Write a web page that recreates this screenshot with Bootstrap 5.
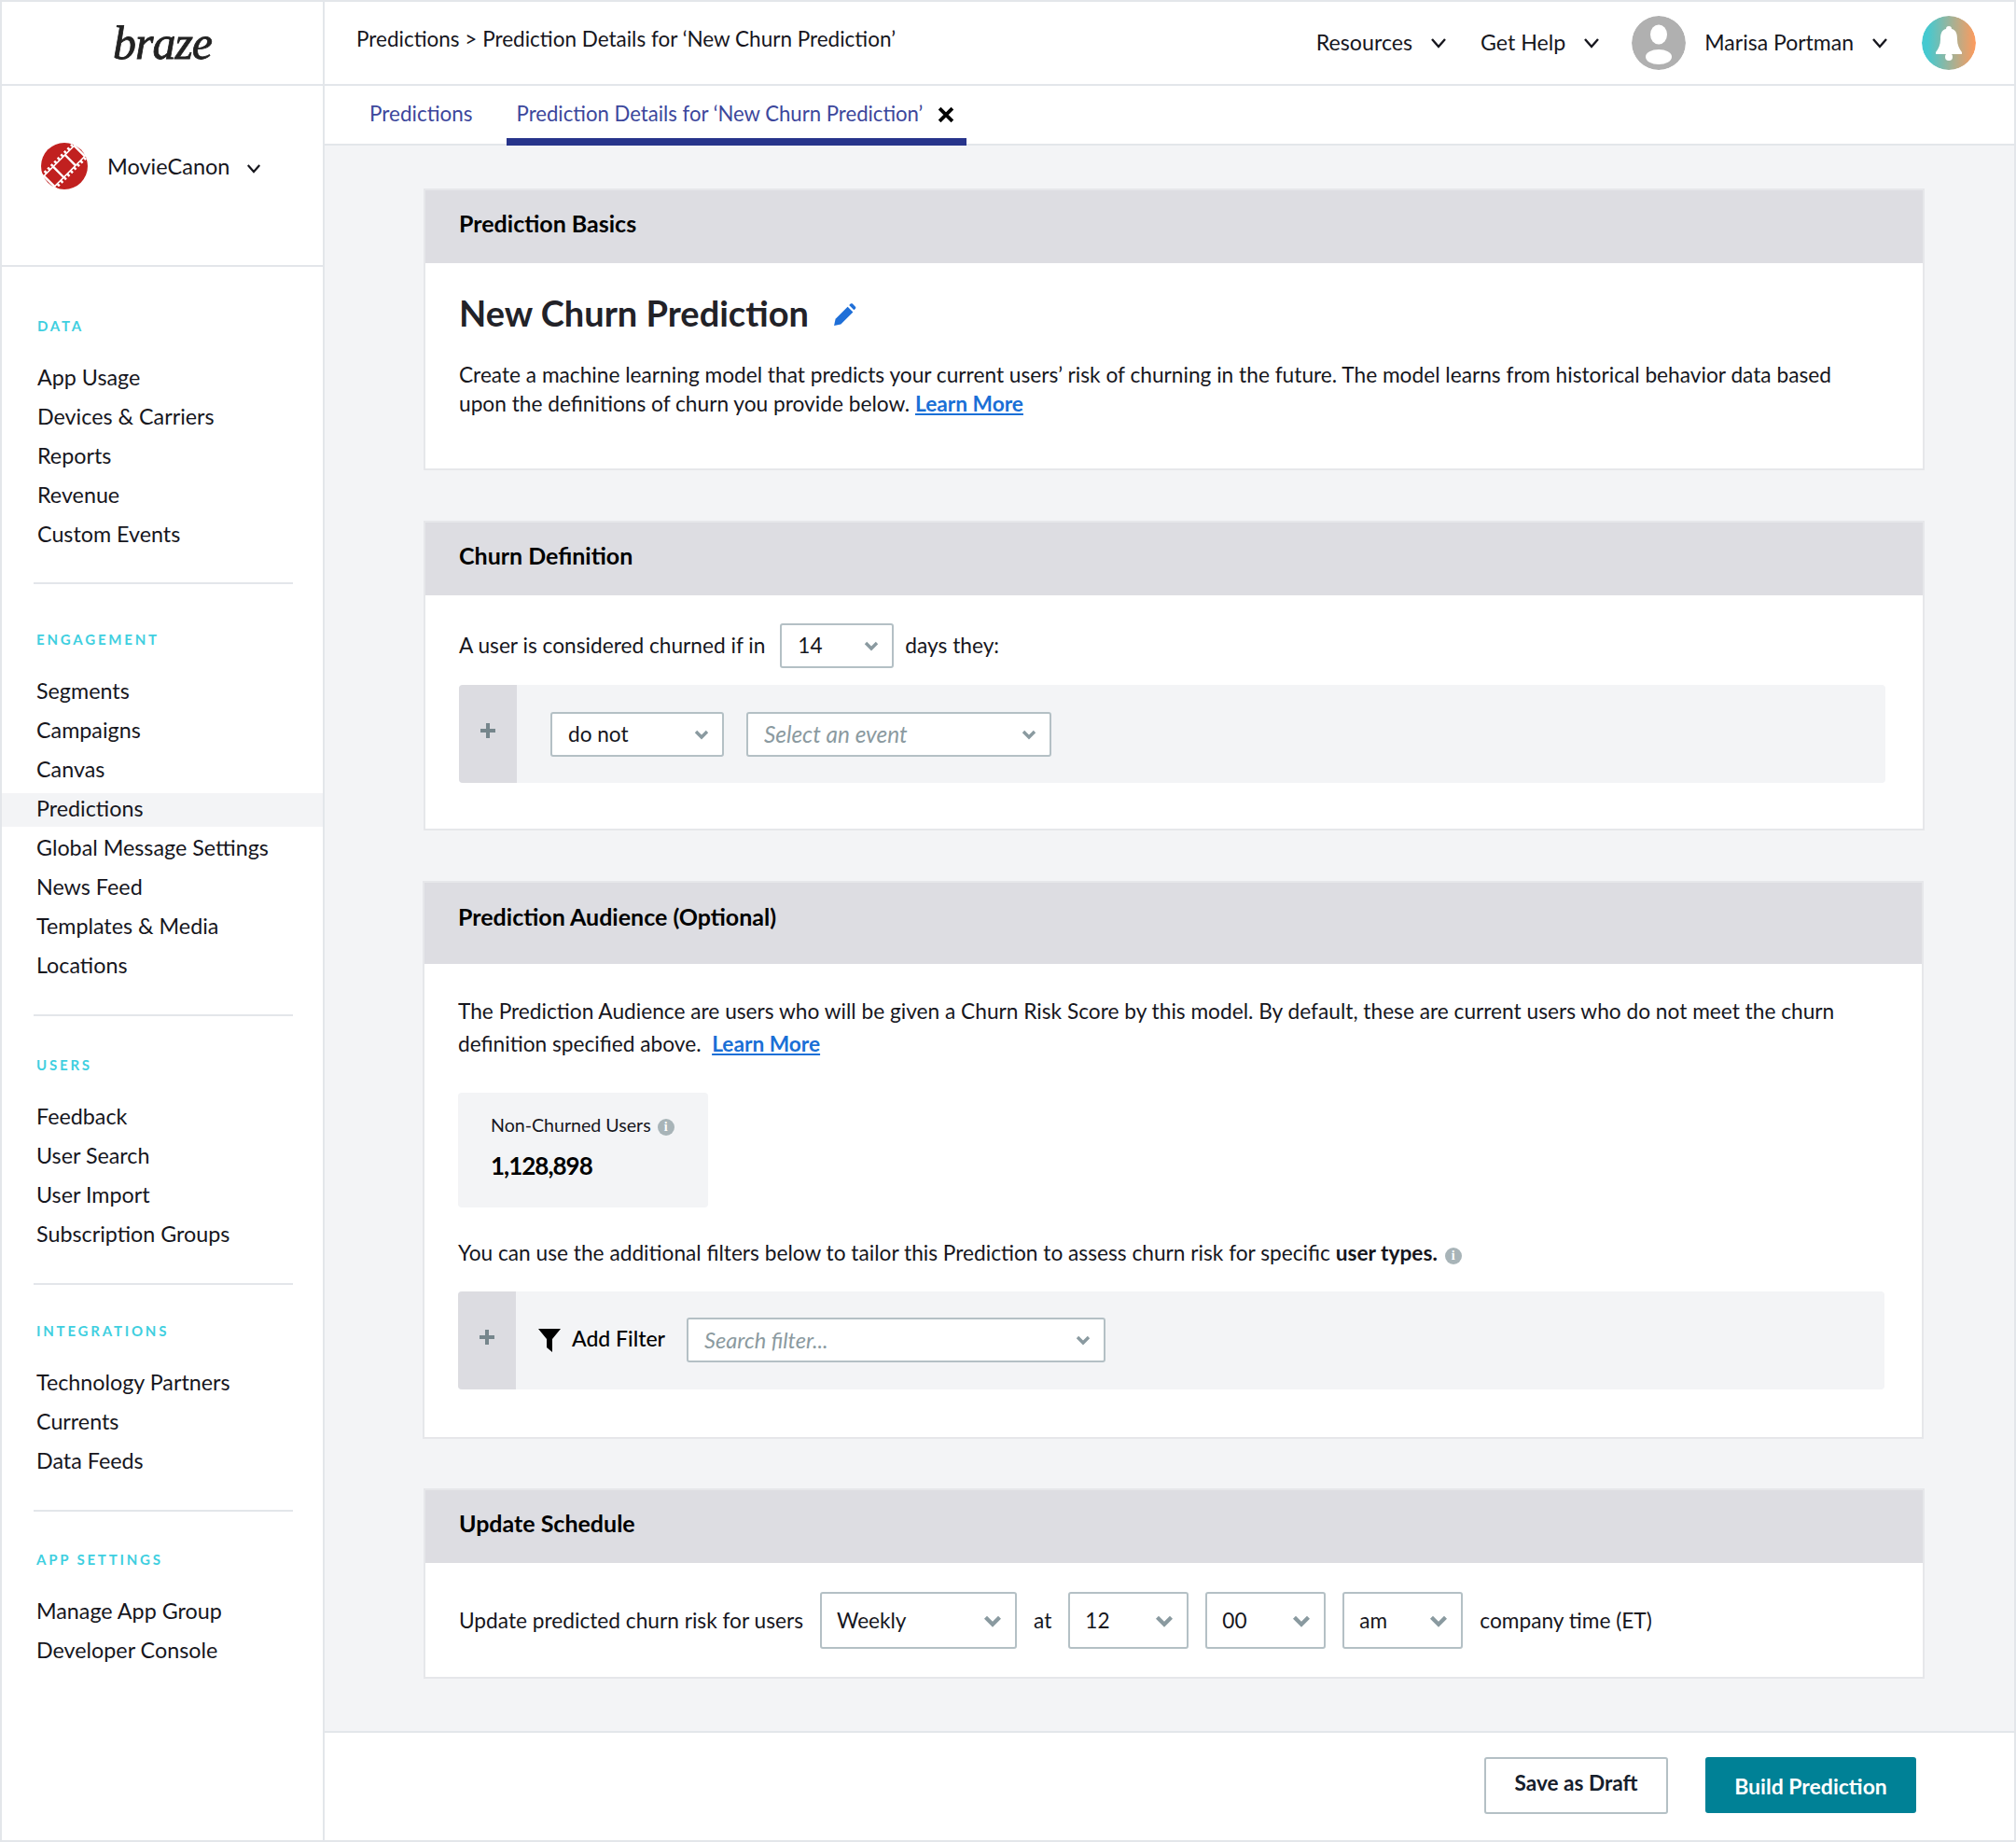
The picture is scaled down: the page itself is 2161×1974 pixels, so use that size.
<!DOCTYPE html>
<html lang="en">
<head>
    <meta charset="UTF-8">
    <title>Prediction Details</title>
    <link href="https://cdn.jsdelivr.net/npm/bootstrap@5.3.0/dist/css/bootstrap.min.css" rel="stylesheet">
    <style>
        html, body { height: 100%; }
        body {
            font-family: "Lato", "Liberation Sans", sans-serif;
            font-size: 22.7px;
            line-height: 30px;
            color: #16161d;
            background: #fff;
        }
        .app-shell { height: 1974px; border: 2px solid #e3e6ea; }

        /* sidebar */
        .side-col { width: 346px; flex: none; border-right: 2px solid #e3e6ea; }
        .logo-cell { height: 90px; border-bottom: 2px solid #e3e6ea; }
        .logo-word {
            font-family: "Liberation Serif", serif;
            font-style: italic;
            font-size: 50px;
            line-height: 50px;
            letter-spacing: -1px;
            color: #222;
            -webkit-text-stroke: 0.8px #222;
        }
        .app-cell { height: 194px; padding: 0 0 21px 42px; border-bottom: 2px solid #e3e6ea; font-size: 23.5px; }
        .app-name { margin-left: 21px; margin-right: 18px; }
        .app-cell svg.chev { margin-top: 5px; }
        .side-label {
            font-size: 15px;
            line-height: 20px;
            font-weight: 700;
            letter-spacing: 2.8px;
            color: #3fcfe0;
            padding-left: 37px;
            margin-bottom: 29px;
        }
        .side-col .nav-link {
            height: 36px;
            line-height: 33px;
            padding: 0 0 0 37px;
            margin-bottom: 6px;
            font-size: 23.3px;
            color: #16161d;
        }
        .side-col .nav-link.on { background: #f3f4f6; }
        .side-rule { height: 2px; margin: 27px 32px 0 34px; background: #e3e6ea; }
        .grp-data { padding-top: 53px; }
        .grp-data .side-rule { margin-top: 26px; }
        .grp-data .side-label, .grp-data .nav-link { padding-left: 38px !important; }
        .grp-eng { padding-top: 49px; }
        .grp-users { padding-top: 42px; }
        .grp-int { padding-top: 39px; }
        .grp-app { padding-top: 41px; }

        /* top bar and tabs */
        .top-bar { height: 90px; flex: none; border-bottom: 2px solid #e3e6ea; padding: 0 41px 0 34px; font-size: 23.2px; }
        .crumbs { margin-top: -8px; font-size: 22.5px; }
        .top-item { margin-left: 36px; }
        .top-item.user-item { margin-left: 34px; }
        .top-label { margin-top: -3px; }
        .user-item .top-label { font-size: 23px; }
        .top-item svg.chev { margin-left: 19px; }
        .round-pic { width: 58px; height: 58px; border-radius: 50%; }
        .avatar-pic { margin-right: 20px; }
        .tab-bar { height: 64px; flex: none; border-bottom: 2px solid #e3e6ea; padding-left: 37px; }
        .tab-bar .nav-link {
            height: 64px;
            line-height: 59px;
            padding: 0 11px;
            font-size: 22.5px;
            color: #3c479c;
            border-bottom: 8px solid transparent;
        }
        .tab-bar .nav-link.on { font-size: 22.15px; border-bottom-color: #27348b; margin-left: 25px; padding-right: 13px; }
        .tab-x { margin: 22px 0 0 16px; }

        /* main area */
        .main-area { background: #f3f4f6; padding: 46px 96px 0 106px; }
        .pred-card {
            --bs-card-border-width: 2px;
            --bs-card-border-color: #e6e7ea;
            --bs-card-border-radius: 0;
            --bs-card-inner-border-radius: 0;
            margin-bottom: 54px;
        }
        .pred-card .card-header {
            height: 78px;
            padding: 0 36px 8px;
            background: #dddde2;
            border: 0;
            font-size: 25px;
            font-weight: 700;
            color: #000;
            display: flex;
            align-items: center;
        }
        .pred-card .card-body { padding: 0 36px; }
        .aud-card { margin-left: -1px; margin-right: 1px; margin-bottom: 53px; }
        .pred-card.aud-card .card-header { height: 87px; padding-bottom: 16px; }
        .big-title { font-size: 38px; line-height: 44px; font-weight: 700; color: #222228; margin: 0; }
        .title-row { padding-top: 31px; }
        .edit-pen { margin: 4px 0 0 26px; }
        .intro { margin: 30px 0 54px; padding-right: 40px; line-height: 30.5px; }
        .more-link { color: #1a6fd6; font-weight: 700; }
        .pick {
            --bs-form-select-bg-img: url("data:image/svg+xml,%3csvg xmlns='http://www.w3.org/2000/svg' viewBox='0 0 16 16'%3e%3cpath fill='none' stroke='%238a9aa0' stroke-width='3.4' d='M2 5l6 6 6-6'/%3e%3c/svg%3e");
            width: auto;
            height: 48px;
            padding: 0 36px 0 17px;
            font-size: 22.6px;
            line-height: 30px;
            color: #16161d;
            border: 2px solid #b4c0c5;
            border-radius: 3px;
            background-size: 16px 16px;
            background-position: right 14px center;
        }
        .pick.empty { color: #8b9aa0; font-style: italic; font-size: 24.4px; }
        .pick.search-pick { font-size: 23.6px; }
        .pick-tall { height: 61px; background-size: 20px 20px; padding-left: 16px; }
        .w-14 { width: 122px; }
        .w-not { width: 186px; }
        .w-evt { width: 327px; }
        .w-search { width: 449px; }
        .w-week { width: 211px; }
        .w-time { width: 129px; }
        .churn-line { padding-top: 30px; margin-bottom: 18px; }
        .churn-body { padding-bottom: 49px !important; }
        .rule-box { height: 105px; background: #f3f4f6; border-radius: 4px; overflow: hidden; }
        .plus-cell { width: 62px; flex: none; background: #dcdce1; padding-top: 40px; text-align: center; line-height: 0; }
        .rule-picks { padding: 29px 0 0 36px; }
        .filter-picks { padding-left: 24px; padding-bottom: 2px; }
        .stat-box { width: 268px; height: 123px; background: #f3f4f6; border-radius: 4px; padding: 20px 0 0 35px; margin: 35px 0 34px; }
        .stat-name { font-size: 19.6px; line-height: 30px; }
        .stat-num { font-size: 26px; line-height: 36px; font-weight: 700; letter-spacing: -1px; color: #000; margin-top: 10px; }
        .info-dot {
            display: inline-block;
            width: 18px;
            height: 18px;
            margin-left: 2px;
            border-radius: 50%;
            background: #a8b4b8;
            color: #fff;
            font: 700 14px/18px "Liberation Serif", serif;
            text-align: center;
            vertical-align: 1px;
        }
        .aud-text { line-height: 35px; padding-top: 33px; }
        .aud-body { padding-bottom: 51px !important; }
        .filter-note { margin-bottom: 26px; }
        .add-label { font-size: 23px; font-weight: 500; color: #000; margin: -3px 23px 0 12px; }
        .sched-body { padding-top: 31px !important; padding-bottom: 30px !important; gap: 18px; }

        /* footer */
        .foot-bar { height: 117px; flex: none; border-top: 2px solid #e3e6ea; padding: 26px 105px 0 0; }
        .draft-btn {
            width: 197px;
            height: 61px;
            border: 2px solid #b4c0c5;
            border-radius: 3px;
            background: #fff;
            color: #16202c;
            font-size: 22.6px;
            font-weight: 700;
            padding: 0 0 6px;
        }
        .build-btn {
            width: 226px;
            height: 60px;
            margin-left: 40px;
            border: 0;
            border-radius: 3px;
            background: #008196;
            color: #fff;
            font-size: 23px;
            font-weight: 700;
            padding: 2px 0 0;
        }
    </style>
</head>
<body>
<svg width="0" height="0" class="position-absolute">
    <symbol id="chev" viewBox="0 0 18 12"><path d="M2 2l7 8 7-8" fill="none" stroke="#16161d" stroke-width="2.4"/></symbol>
    <symbol id="plus" viewBox="0 0 18 18"><path d="M9 1v16M1 9h16" fill="none" stroke="#76868c" stroke-width="4"/></symbol>
</svg>
<div class="app-shell d-flex">
    <aside class="side-col d-flex flex-column">
        <div class="logo-cell d-flex align-items-center justify-content-center"><span class="logo-word">braze</span></div>
        <div class="app-cell d-flex align-items-center">
            <svg width="50" height="50" viewBox="0 0 50 50">
                <circle cx="25" cy="25" r="25" fill="#c1201f"/>
                <g transform="rotate(-45 25 25)" fill="none" stroke="#fff">
                    <path d="M-5 17H55M-5 33H55" stroke-width="1.6"/>
                    <path d="M-5 15H55M-5 35H55" stroke-width="3" stroke-dasharray="2.5 2.5"/>
                    <path d="M16 17V33M34 17V33M2 17V33M48 17V33" stroke-width="2.4"/>
                </g>
            </svg>
            <span class="app-name">MovieCanon</span>
            <svg class="chev" width="16" height="11"><use href="#chev"/></svg>
        </div>
        <div class="grp-data">
            <div class="side-label">DATA</div>
            <nav class="nav flex-column">
                <a class="nav-link" href="#">App Usage</a>
                <a class="nav-link" href="#">Devices &amp; Carriers</a>
                <a class="nav-link" href="#">Reports</a>
                <a class="nav-link" href="#">Revenue</a>
                <a class="nav-link" href="#">Custom Events</a>
            </nav>
            <div class="side-rule"></div>
        </div>
        <div class="grp-eng">
            <div class="side-label">ENGAGEMENT</div>
            <nav class="nav flex-column">
                <a class="nav-link" href="#">Segments</a>
                <a class="nav-link" href="#">Campaigns</a>
                <a class="nav-link" href="#">Canvas</a>
                <a class="nav-link on" href="#">Predictions</a>
                <a class="nav-link" href="#">Global Message Settings</a>
                <a class="nav-link" href="#">News Feed</a>
                <a class="nav-link" href="#">Templates &amp; Media</a>
                <a class="nav-link" href="#">Locations</a>
            </nav>
            <div class="side-rule"></div>
        </div>
        <div class="grp-users">
            <div class="side-label">USERS</div>
            <nav class="nav flex-column">
                <a class="nav-link" href="#">Feedback</a>
                <a class="nav-link" href="#">User Search</a>
                <a class="nav-link" href="#">User Import</a>
                <a class="nav-link" href="#">Subscription Groups</a>
            </nav>
            <div class="side-rule"></div>
        </div>
        <div class="grp-int">
            <div class="side-label">INTEGRATIONS</div>
            <nav class="nav flex-column">
                <a class="nav-link" href="#">Technology Partners</a>
                <a class="nav-link" href="#">Currents</a>
                <a class="nav-link" href="#">Data Feeds</a>
            </nav>
            <div class="side-rule"></div>
        </div>
        <div class="grp-app">
            <div class="side-label">APP SETTINGS</div>
            <nav class="nav flex-column">
                <a class="nav-link" href="#">Manage App Group</a>
                <a class="nav-link" href="#">Developer Console</a>
            </nav>
        </div>
    </aside>

    <div class="flex-grow-1 d-flex flex-column">
        <header class="top-bar d-flex align-items-center">
            <div class="crumbs flex-grow-1">Predictions &gt; Prediction Details for ‘New Churn Prediction’</div>
            <div class="top-item d-flex align-items-center"><span class="top-label">Resources</span><svg class="chev" width="18" height="12"><use href="#chev"/></svg></div>
            <div class="top-item d-flex align-items-center"><span class="top-label">Get Help</span><svg class="chev" width="18" height="12"><use href="#chev"/></svg></div>
            <div class="top-item user-item d-flex align-items-center">
                <svg class="round-pic avatar-pic" viewBox="0 0 58 58">
                    <circle cx="29" cy="29" r="29" fill="#b0b0b0"/>
                    <ellipse cx="29" cy="20" rx="9" ry="10.5" fill="#fff"/>
                    <ellipse cx="29" cy="44" rx="14" ry="8" fill="#fff"/>
                </svg>
                <span class="top-label">Marisa Portman</span><svg class="chev" width="18" height="12"><use href="#chev"/></svg>
            </div>
            <div class="top-item">
                <svg class="round-pic d-block" viewBox="0 0 58 58">
                    <defs><linearGradient id="bellfill"><stop offset="0.1" stop-color="#45c9d0"/><stop offset="1" stop-color="#ff9a5c"/></linearGradient></defs>
                    <circle cx="29" cy="29" r="29" fill="url(#bellfill)"/>
                    <path d="M29 11c2 0 3 1 3 3 5 1 6 6 6 11 0 6 2 10 5 14v2H15v-2c3-4 5-8 5-14 0-5 1-10 6-11 0-2 1-3 3-3z" fill="#fff"/>
                    <circle cx="29" cy="44" r="4" fill="#fff"/>
                </svg>
            </div>
        </header>

        <div class="tab-bar">
            <nav class="nav">
                <a class="nav-link" href="#">Predictions</a>
                <a class="nav-link on d-flex" href="#">Prediction Details for ‘New Churn Prediction’
                    <svg class="tab-x" width="18" height="18" viewBox="0 0 17 17"><path d="M2 2l13 13M15 2L2 15" stroke="#000" stroke-width="3.6"/></svg>
                </a>
            </nav>
        </div>

        <main class="main-area flex-grow-1">
            <section class="card pred-card">
                <div class="card-header">Prediction Basics</div>
                <div class="card-body">
                    <div class="title-row d-flex align-items-center">
                        <h1 class="big-title">New Churn Prediction</h1>
                        <svg class="edit-pen" width="25" height="25" viewBox="0 0 24 24" fill="#1f6fd8"><path d="M1 23l1.500-7L15 3.500l5.500 5.500L8 21.500z"/><path d="M16.500 2l1.500-1.500c.8-.5 1.500-.5 2 0l3 3c.5.5.5 1.200 0 2L21.500 7z"/></svg>
                    </div>
                    <p class="intro">Create a machine learning model that predicts your current users’ risk of churning in the future. The model learns from historical behavior data based upon the definitions of churn you provide below. <a class="more-link" href="#">Learn More</a></p>
                </div>
            </section>

            <section class="card pred-card">
                <div class="card-header">Churn Definition</div>
                <div class="card-body churn-body">
                    <div class="churn-line d-flex align-items-center gap-2">
                        <span class="me-2">A user is considered churned if in</span>
                        <select class="form-select pick w-14"><option>14</option></select>
                        <span class="ms-1">days they:</span>
                    </div>
                    <div class="rule-box d-flex me-1">
                        <div class="plus-cell"><svg width="18" height="18"><use href="#plus"/></svg></div>
                        <div class="rule-picks d-flex align-items-start gap-4">
                            <select class="form-select pick w-not"><option>do not</option></select>
                            <select class="form-select pick empty w-evt"><option>Select an event</option></select>
                        </div>
                    </div>
                </div>
            </section>

            <section class="card pred-card aud-card">
                <div class="card-header">Prediction Audience (Optional)</div>
                <div class="card-body aud-body">
                    <div class="aud-text">The Prediction Audience are users who will be given a Churn Risk Score by this model. By default, these are current users who do not meet the churn definition specified above.&nbsp; <a class="more-link" href="#">Learn More</a></div>
                    <div class="stat-box">
                        <div class="stat-name">Non-Churned Users <span class="info-dot">i</span></div>
                        <div class="stat-num">1,128,898</div>
                    </div>
                    <div class="filter-note">You can use the additional filters below to tailor this Prediction to assess churn risk for specific <strong>user types.</strong> <span class="info-dot">i</span></div>
                    <div class="rule-box d-flex me-1">
                        <div class="plus-cell"><svg width="18" height="18"><use href="#plus"/></svg></div>
                        <div class="filter-picks d-flex align-items-center">
                            <svg width="24" height="26" viewBox="0 0 24 26"><path d="M0 1h24L15 12v14l-6-5v-9z" fill="#000"/></svg>
                            <span class="add-label">Add Filter</span>
                            <select class="form-select pick empty search-pick w-search"><option>Search filter...</option></select>
                        </div>
                    </div>
                </div>
            </section>

            <section class="card pred-card mb-0">
                <div class="card-header">Update Schedule</div>
                <div class="card-body sched-body d-flex align-items-center">
                    <span>Update predicted churn risk for users</span>
                    <select class="form-select pick pick-tall w-week"><option>Weekly</option></select>
                    <span>at</span>
                    <select class="form-select pick pick-tall w-time"><option>12</option></select>
                    <select class="form-select pick pick-tall w-time"><option>00</option></select>
                    <select class="form-select pick pick-tall w-time"><option>am</option></select>
                    <span>company time (ET)</span>
                </div>
            </section>
        </main>

        <footer class="foot-bar d-flex justify-content-end align-items-start">
            <button type="button" class="btn draft-btn">Save as Draft</button>
            <button type="button" class="btn build-btn">Build Prediction</button>
        </footer>
    </div>
</div>
<script src="https://cdn.jsdelivr.net/npm/bootstrap@5.3.0/dist/js/bootstrap.bundle.min.js"></script>
</body>
</html>
